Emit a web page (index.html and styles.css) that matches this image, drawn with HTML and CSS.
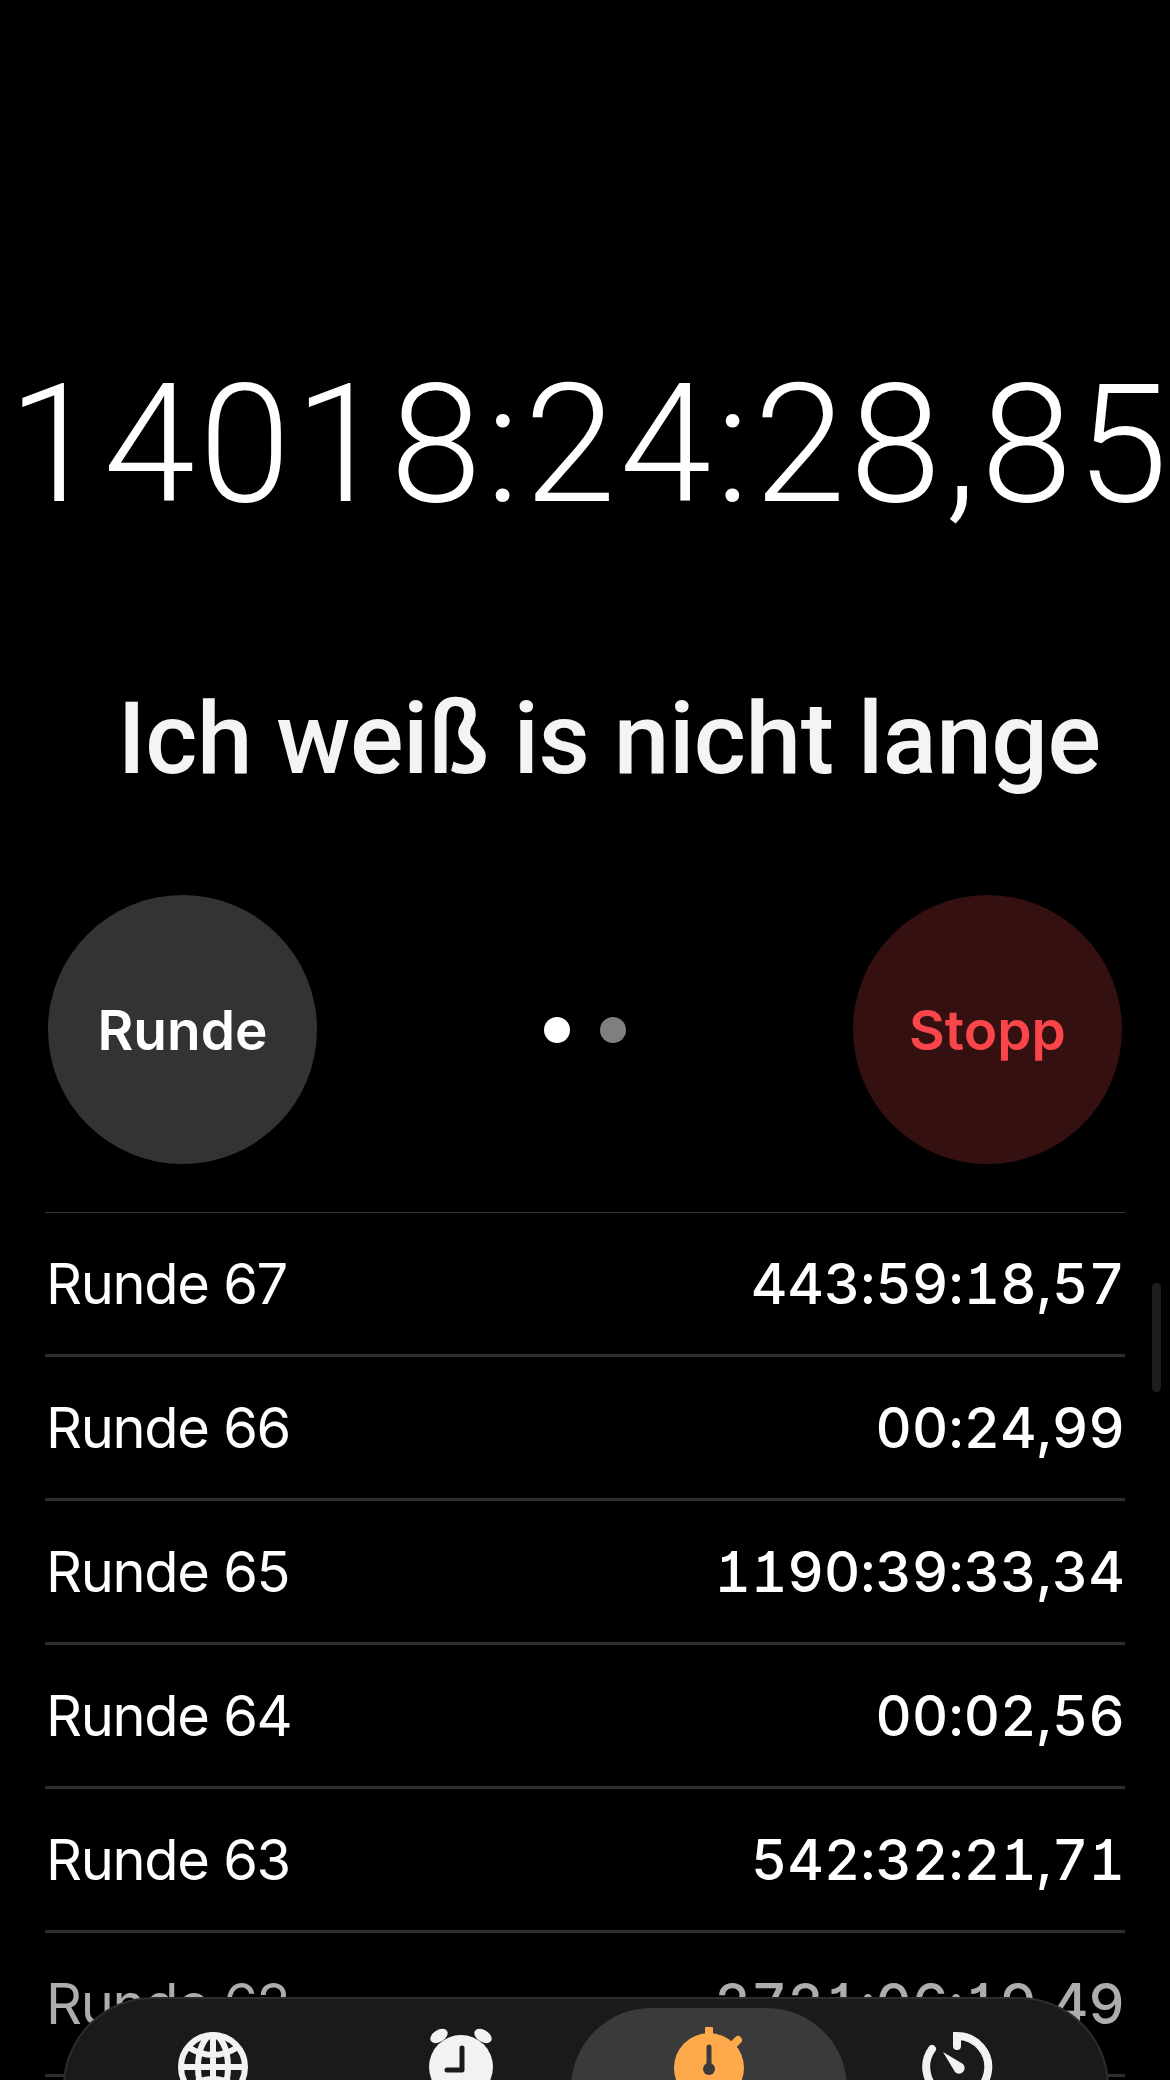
FILE: index.html
```html
<!DOCTYPE html>
<html lang="de">
<head>
  <meta charset="UTF-8" />
  <title>Stoppuhr</title>
  <link rel="stylesheet" href="styles.css">
</head>
<body>
  <div class="timer">14018:24:28,85</div>
  <div class="caption">Ich weiß is nicht lange</div>

  <section class="controls">
    <button class="round-btn btn-lap">Runde</button>
    <div class="dots">
      <span class="dot dot-on"></span>
      <span class="dot"></span>
    </div>
    <button class="round-btn btn-stop">Stopp</button>
  </section>

  <section class="laps">
    <div class="lap"><span>Runde 67</span><span class="lap-time">443:59:18,57</span></div>
    <div class="lap"><span>Runde 66</span><span class="lap-time">00:24,99</span></div>
    <div class="lap"><span>Runde 65</span><span class="lap-time">1190:39:33,34</span></div>
    <div class="lap"><span>Runde 64</span><span class="lap-time">00:02,56</span></div>
    <div class="lap"><span>Runde 63</span><span class="lap-time">542:32:21,71</span></div>
    <div class="lap lap-fade"><span>Runde 62</span><span class="lap-time">2721:06:19,49</span></div>
  </section>

  <div class="scrollbar"></div>

  <nav class="tabbar">
    <a class="tab" href="#">
      <svg class="icon" viewBox="0 0 80 80" fill="none" stroke="#f2f2f2" stroke-width="6">
        <circle cx="40" cy="40" r="32"/>
        <ellipse cx="40" cy="40" rx="15" ry="32"/>
        <path d="M40 8V72M8 40H72M15 20Q40 36 65 20M15 60Q40 44 65 60"/>
      </svg>
    </a>
    <a class="tab" href="#">
      <svg class="icon" viewBox="0 0 80 80">
        <circle cx="40" cy="40" r="32" fill="#f2f2f2"/>
        <ellipse cx="18" cy="9" rx="9.5" ry="6" transform="rotate(-32 18 9)" fill="#f2f2f2"/>
        <ellipse cx="62" cy="9" rx="9.5" ry="6" transform="rotate(32 62 9)" fill="#f2f2f2"/>
        <path d="M41 21V43H26" fill="none" stroke="#1a1a1a" stroke-width="5" stroke-linecap="round" stroke-linejoin="round"/>
      </svg>
    </a>
    <a class="tab tab-active" href="#">
      <svg class="icon" viewBox="0 0 80 80">
        <circle cx="40" cy="41" r="35" fill="#ffa94d"/>
        <path d="M40 2V12M69 13L63 19" stroke="#ffa94d" stroke-width="8" stroke-linecap="round"/>
        <path d="M40 20V41" stroke="#3a3a3a" stroke-width="5" stroke-linecap="round"/>
        <circle cx="40" cy="42" r="6" fill="#3a3a3a"/>
      </svg>
    </a>
    <a class="tab" href="#">
      <svg class="icon" viewBox="0 0 80 80">
        <path d="M40 19V9A31 31 0 1 1 15 22" fill="none" stroke="#f2f2f2" stroke-width="8" stroke-linecap="round"/>
        <path d="M26 25L46 37A5.5 5.5 0 0 1 38 45Z" fill="#f2f2f2"/>
      </svg>
    </a>
  </nav>
</body>
</html>
```

FILE: styles.css
```css
*{margin:0;padding:0;box-sizing:border-box}
html,body{height:2080px;overflow:hidden}
body{position:relative;background:#000;color:#fff;font-family:Inter,"Liberation Sans",sans-serif}

.timer{padding:367px 0 0 8px;height:520px;line-height:155px;font-family:Roboto,sans-serif;font-size:165px;font-weight:300;letter-spacing:4px;text-align:center;white-space:nowrap}
.caption{margin-top:164px;padding-left:48px;height:110px;line-height:110px;font-family:Roboto,sans-serif;font-size:100px;font-weight:500;letter-spacing:-.5px;text-align:center;color:#f4f4f4;white-space:nowrap}

.controls{display:flex;justify-content:space-between;align-items:center;margin-top:101px;padding:0 48px}
.round-btn{width:269px;height:269px;border:none;border-radius:50%;font-family:inherit;font-size:55px;font-weight:600}
.btn-lap{background:#333;color:#fff}
.btn-stop{background:#351010;color:#fa464b}
.dots{display:flex;gap:30px}
.dot{width:26px;height:26px;border-radius:50%;background:#7f7f7f}
.dot-on{background:#fff}

.laps{margin:48px 45px 0;border-top:1px solid #333}
.lap{display:flex;justify-content:space-between;align-items:center;height:144px;padding-left:1px;border-bottom:3px solid #2e2e2e;font-size:56px;font-weight:400;letter-spacing:-1.3px}
.lap-time{font-weight:540;letter-spacing:.2px;font-feature-settings:"tnum","cv01"}
.lap-fade{color:#adadad}

.scrollbar{position:absolute;left:1152px;top:1283px;width:9px;height:109px;border-radius:5px;background:#1d1d1d}

.tabbar{position:absolute;left:63px;top:1997px;display:grid;grid-template-columns:repeat(4,248px);width:1046px;height:180px;padding:9px 24px 0;background:#1a1a1a;border:2px solid #2d2d2d;border-radius:100px}
.tab{display:flex;justify-content:center;height:160px;padding-top:19px}
.tab-active{margin:0 -14px;background:#3a3a3a;border-radius:90px}
.icon{width:80px;height:80px}
```
